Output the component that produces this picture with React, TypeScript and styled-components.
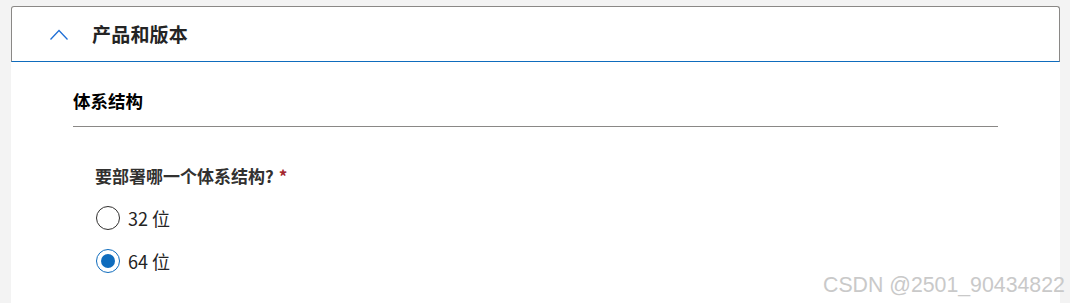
import { useState } from 'react'
import styled, { createGlobalStyle } from 'styled-components'

const GlobalStyle = createGlobalStyle`
    html, body {
        margin: 0;
        padding: 0;
        background: #f3f3f3;
        font-family: "Noto Sans CJK SC", "Noto Sans", sans-serif;
        color: #242424;
    }
`

// grey page with the accordion card inset a little
const Page = styled.div`
    position: relative;
    height: 303px;
    padding: 6px 10px 0 11px;
    box-sizing: border-box;
    overflow: hidden;
`

const Card = styled.div`
    display: flex;
    flex-direction: column;
    height: 100%;
`

// the accordion trigger bar
const Header = styled.button`
    display: flex;
    align-items: center;
    gap: 24px;
    height: 56px;
    padding: 0 0 0 38px;
    box-sizing: border-box;
    background: #ffffff;
    border: 1px solid #8a8886;
    border-bottom-color: #0f6cbd;
    border-radius: 3px 3px 0 0;
    font-family: inherit;
    cursor: pointer;
    text-align: left;
`

const HeaderTitle = styled.span`
    font-size: 19px;
    font-weight: 700;
    line-height: 26px;
    color: #242424;
    letter-spacing: 0.2px;
`

// white body of the open accordion
const Panel = styled.div`
    flex: 1;
    background: #ffffff;
    padding: 27px 62px 0 62px;
`

const SectionTitle = styled.h2`
    margin: 0;
    padding-bottom: 13px;
    border-bottom: 1px solid #8a8886;
    font-size: 17.5px;
    font-weight: 700;
    line-height: 24px;
    color: #000000;
`

const Field = styled.fieldset`
    margin: 38px 0 0 0;
    padding: 0 0 0 22px;
    border: none;
`

const Question = styled.legend`
    padding: 0;
    font-size: 17px;
    font-weight: 600;
    line-height: 22px;
    color: #323130;
`

const Required = styled.span`
    color: #a4262c;
    margin-left: 5px;
`

const Options = styled.div`
    display: flex;
    flex-direction: column;
    gap: 19px;
    margin-top: 19px;
    padding-left: 1px;
`

const Option = styled.label`
    display: flex;
    align-items: center;
    gap: 8px;
    height: 24px;
    font-size: 18px;
    line-height: 24px;
    color: #242424;
    cursor: pointer;
`

const Circle = styled.span<{ $checked: boolean }>`
    display: flex;
    align-items: center;
    justify-content: center;
    width: 24px;
    height: 24px;
    box-sizing: border-box;
    border-radius: 50%;
    border: 1px solid ${p => (p.$checked ? '#0f6cbd' : '#323130')};
    background: #ffffff;

    &::after {
        content: '';
        display: ${p => (p.$checked ? 'block' : 'none')};
        width: 14px;
        height: 14px;
        border-radius: 50%;
        background: #0f6cbd;
    }
`

const HiddenInput = styled.input`
    display: none;
`

// CSDN watermark sitting over the corner
const Watermark = styled.div`
    position: absolute;
    left: 823px;
    top: 272px;
    font-family: "Liberation Sans", Arial, sans-serif;
    font-size: 21.3px;
    line-height: 26px;
    color: #c9c9c9;
    white-space: nowrap;
    pointer-events: none;
`

const ChevronUp = () => (
    <svg width="18" height="11" viewBox="0 0 18 11" fill="none">
        <path d="M0.5 10.5 L9 1.5 L17.5 10.5" stroke="#1f6fd6" strokeWidth="1.3" />
    </svg>
)

const archs = ['32 位', '64 位']

function App() {
    const [arch, setArch] = useState('64 位')

    return (
        <>
            <GlobalStyle />
            <Page>
                <Card>
                    <Header>
                        <ChevronUp />
                        <HeaderTitle>产品和版本</HeaderTitle>
                    </Header>
                    <Panel>
                        <SectionTitle>体系结构</SectionTitle>
                        <Field>
                            <Question>
                                要部署哪一个体系结构?<Required>*</Required>
                            </Question>
                            <Options>
                                {archs.map(a => (
                                    <Option key={a}>
                                        <HiddenInput
                                            type="radio"
                                            name="arch"
                                            checked={arch === a}
                                            onChange={() => setArch(a)}
                                        />
                                        <Circle $checked={arch === a} />
                                        {a}
                                    </Option>
                                ))}
                            </Options>
                        </Field>
                    </Panel>
                </Card>
                <Watermark>CSDN @2501_90434822</Watermark>
            </Page>
        </>
    )
}

export default App
